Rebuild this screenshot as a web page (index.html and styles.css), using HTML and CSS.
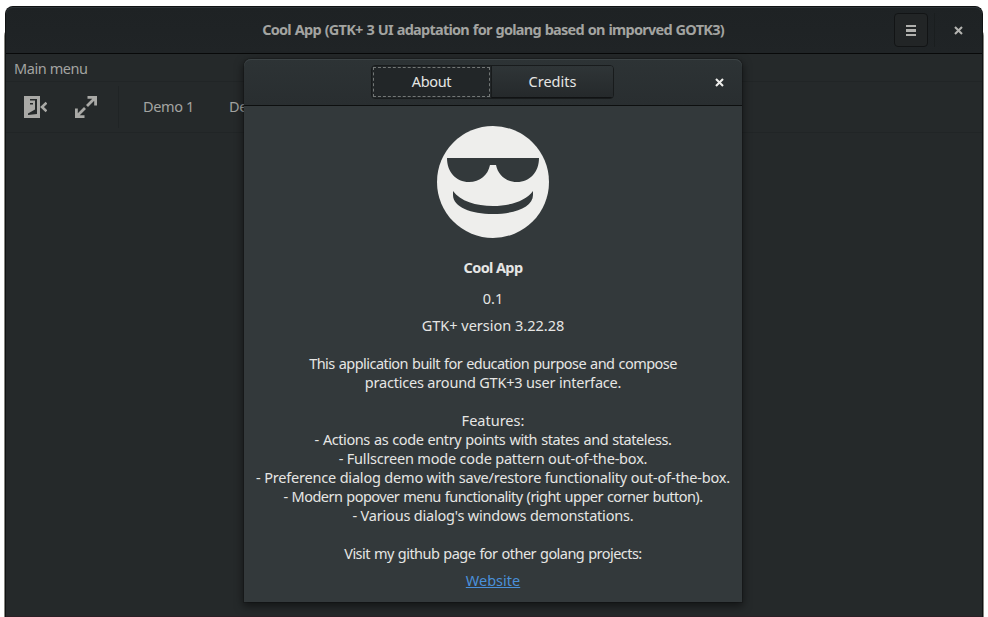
FILE: index.html
```
<!DOCTYPE html>
<html lang="en">
<head>
<meta charset="utf-8">
<title>Cool App</title>
<link rel="stylesheet" href="styles.css">
</head>
<body>
<div class="window">
  <header class="titlebar">
    <h1 class="title"><span>Cool App (GTK+ 3 UI adaptation for golang based on imporved GOTK3)</span></h1>
    <button class="menu-button" aria-label="Menu"><svg width="10" height="11" viewBox="0 0 10 11" shape-rendering="crispEdges"><path d="M0 0h10v2H0zM0 4h10v3H0zM0 9h10v2H0z" fill="#b0b0ad"/></svg></button>
    <div class="title-sep"></div>
    <button class="close" aria-label="Close"><svg width="9" height="9" viewBox="0 0 9 9"><path d="M1 1l7 7M8 1L1 8" stroke="#b4b4b1" stroke-width="2.1"/></svg></button>
  </header>
  <nav class="menubar">Main menu</nav>
  <div class="toolbar">
    <svg class="tool-exit" width="23" height="22" viewBox="0 0 23 22"><path fill="#a9a9a6" fill-rule="evenodd" d="M0 0h16v22H0zM6 3h7v15l-9 1v-1.500l7-4V4.500H6zM6 7h3v1.500H6z"/><path d="M22.500 6.800l-4.500 4.200 4.500 4.200" fill="none" stroke="#a9a9a6" stroke-width="2.600"/></svg>
    <svg class="tool-full" width="22" height="22" viewBox="0 0 22 22" fill="none" stroke="#a9a9a6" stroke-width="2.800"><path d="M12.500 1.400h8.100V9.500M20 2l-8 8M1.400 12.500v8.100H9.500M2 20l8-8"/></svg>
    <div class="tool-sep"></div>
    <span class="demo">Demo 1</span>
    <span class="demo">Demo 2</span>
  </div>
  <div class="bottom-edge"></div>
</div>
<section class="dialog">
  <header class="dialog-header">
    <div class="tabs"><button class="tab active">About</button><button class="tab">Credits</button></div>
    <button class="dialog-close" aria-label="Close"><svg width="9" height="9" viewBox="0 0 9 9"><path d="M1 1l7 7M8 1L1 8" stroke="#eeeeec" stroke-width="2.1"/></svg></button>
  </header>
  <div class="about">
    <svg class="logo" width="112" height="112" viewBox="0 0 112 112"><circle cx="56" cy="56" r="56" fill="#eeeeec"/><path fill="#33393b" d="M10 32H102C102 46 93 56 80 56C69 56 61 49 59 39H53C51 49 43 56 32 56C19 56 10 46 10 32ZM16 65C23 75 39 80 56 80S89 75 96 65V69C96 81 78 88 56 88S16 81 16 69Z"/></svg>
    <h2 class="name">Cool App</h2>
    <p class="version">0.1</p>
    <div class="comments">
      <p>GTK+ version 3.22.28</p>
      <p class="para tight">This application built for education purpose and compose</p>
      <p class="snug">practices around GTK+3 user interface.</p>
      <p class="para">Features:</p>
      <p class="medium">- Actions as code entry points with states and stateless.</p>
      <p class="snug">- Fullscreen mode code pattern out-of-the-box.</p>
      <p class="snug">- Preference dialog demo with save/restore functionality out-of-the-box.</p>
      <p class="tight">- Modern popover menu functionality (right upper corner button).</p>
      <p class="snug">- Various dialog's windows demonstations.</p>
      <p class="para tight">Visit my github page for other golang projects:</p>
    </div>
    <a class="website">Website</a>
  </div>
</section>
</body>
</html>
```
FILE: styles.css
```
*{box-sizing:border-box}
body{margin:0;height:617px;overflow:hidden;background:#fff;font:14.5px/19px "Noto Sans",sans-serif;color:#e6e6e4;position:relative}
h1,h2,p{margin:0;font-size:inherit}
button{font:inherit;color:inherit;padding:0;border:0;background:none}
svg{display:block}
.window{width:978px;height:611px;margin:6px 0 0 5px;background:#25292a;border-radius:8px 8px 0 0;border:1px solid #101213;border-bottom:0;color:#a3a4a1;display:flex;flex-direction:column;box-shadow:0 22px 0 1px #84847f}
.titlebar{height:47px;background:linear-gradient(#1e2224,#202426);border-bottom:1px solid #080909;border-radius:7px 7px 0 0;display:flex;align-items:center;flex:none;box-shadow:inset 0 1px #2c3236}
.title{width:976px;margin-right:-88px;padding:0 2px 1px 0;text-align:center;white-space:nowrap;font-weight:700;letter-spacing:-.75px;word-spacing:.8px;flex:none}
.menu-button{width:34px;height:34px;border:1px solid #121415;border-radius:4px;background:#222526;display:grid;place-items:center;flex:none}
.title-sep{width:1px;height:34px;background:#1a1e1f;margin-left:6px}
.close{margin-left:19px}
.menubar{height:28px;padding:5px 8px;letter-spacing:-.42px;border-bottom:1px solid #212526}
.toolbar{height:51px;display:flex;align-items:center;border-bottom:1px solid #212526;padding-left:18px;flex:none;white-space:nowrap}
.tool-full{margin-left:28px}
.tool-sep{width:1px;height:42px;background:#202425;margin:0 24px 0 21px}
.demo{width:86px;padding-bottom:2px;letter-spacing:-.35px}
.bottom-edge{margin-top:auto;height:1px;background:#2b2026}
.dialog{position:absolute;left:244px;top:59px;width:498px;height:543px;background:#33393b;border-radius:7px 7px 0 0;box-shadow:0 3px 9px 1px rgba(0,0,0,.5),0 0 0 1px rgba(0,0,0,.15)}
.dialog-header{height:47px;border-radius:7px 7px 0 0;background:linear-gradient(#2d3335,#292e30);border-bottom:1px solid #0d0f0f;box-shadow:inset 0 1px #3c4345;display:flex;align-items:center;padding-left:127px}
.tabs{display:flex;width:243px;height:34px;border:1px solid #181b1c;border-radius:4px;overflow:hidden}
.tab{width:122px;background:linear-gradient(#2f3537,#25292b);border-bottom:1px solid #101213;border-left:1px solid #181b1c}
.tab.active{width:119px;background:#222628;border:0;padding-bottom:1px;letter-spacing:-.35px;outline:1px dashed #737776;outline-offset:-2px}
.dialog-close{margin-left:100.5px}
.about{display:flex;flex-direction:column;align-items:center;padding-top:20px;text-align:center;white-space:nowrap}
.name{font-weight:700;letter-spacing:-.63px;margin-top:20px}
.version{margin-top:12px}
.comments{margin-top:8px}
.para{margin-top:19px}
.tight{letter-spacing:-.54px;word-spacing:.8px}
.medium{letter-spacing:-.43px;word-spacing:.8px}
.snug{letter-spacing:-.19px}
.website{margin-top:8px;color:#4a90d9;text-decoration:underline}
```
